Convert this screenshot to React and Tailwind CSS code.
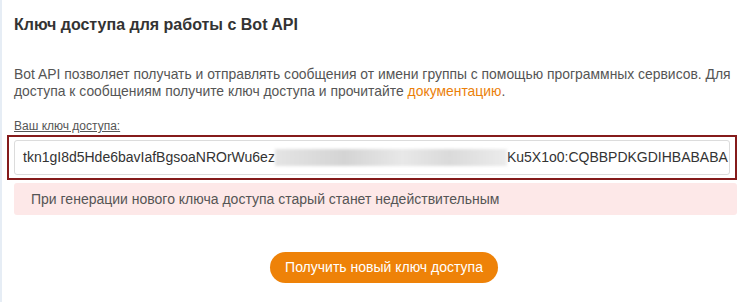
import React from "react";

export default function App() {
  return (
    <div className="w-[740px] h-[302px] bg-white border-l-2 border-[#e6edf5] font-['Liberation_Sans',Arial,sans-serif] text-[#333]">
      <div className="pl-[12px] pr-[2px] pt-[16px]">
        <h2 className="text-[16px] leading-[18px] font-bold text-[#333]">
          Ключ доступа для работы с Bot API
        </h2>
        <p className="mt-[32px] text-[13.9px] leading-[17px] text-[#555]">
          Bot API позволяет получать и отправлять сообщения от имени группы с помощью программных сервисов. Для доступа к сообщениям получите ключ доступа и прочитайте{" "}
          <span className="text-[#eb7f0a]">документацию</span>.
        </p>
        <div className="mt-[18px] text-[12px] leading-[16px] text-[#555] underline">Ваш ключ доступа:</div>
      </div>
      <div className="ml-[5px] mr-[3px] mt-[1px] border-2 border-[#851b1b] px-[5px] py-[3px]">
        <div className="h-[35px] border border-[#dcdcdc] rounded-[3px] flex items-center pl-[8px] text-[14px] text-[#333] whitespace-nowrap overflow-hidden">
          <span>tkn1gI8d5Hde6bavIafBgsoaNROrWu6ez</span>
          <span className="inline-block shrink-0 w-[232px] h-[17px] bg-[linear-gradient(90deg,#e4e4e4,#d4d4d4_30%,#e8e8e8_55%,#dadada_75%,#ececec)] blur-[1.5px]"></span>
          <span>Ku5X1o0:CQBBPDKGDIHBABABA</span>
        </div>
      </div>
      <div className="ml-[12px] mr-[3px] mt-[3px] h-[32px] bg-[#fde8e8] rounded-[3px] flex items-center pl-[17px] text-[14px] text-[#555]">
        При генерации нового ключа доступа старый станет недействительным
      </div>
      <div className="flex justify-center mt-[37px] pl-[26px]">
        <button className="w-[228px] h-[31px] rounded-full bg-[#ee8208] text-white text-[14px]">
          Получить новый ключ доступа
        </button>
      </div>
    </div>
  );
}
